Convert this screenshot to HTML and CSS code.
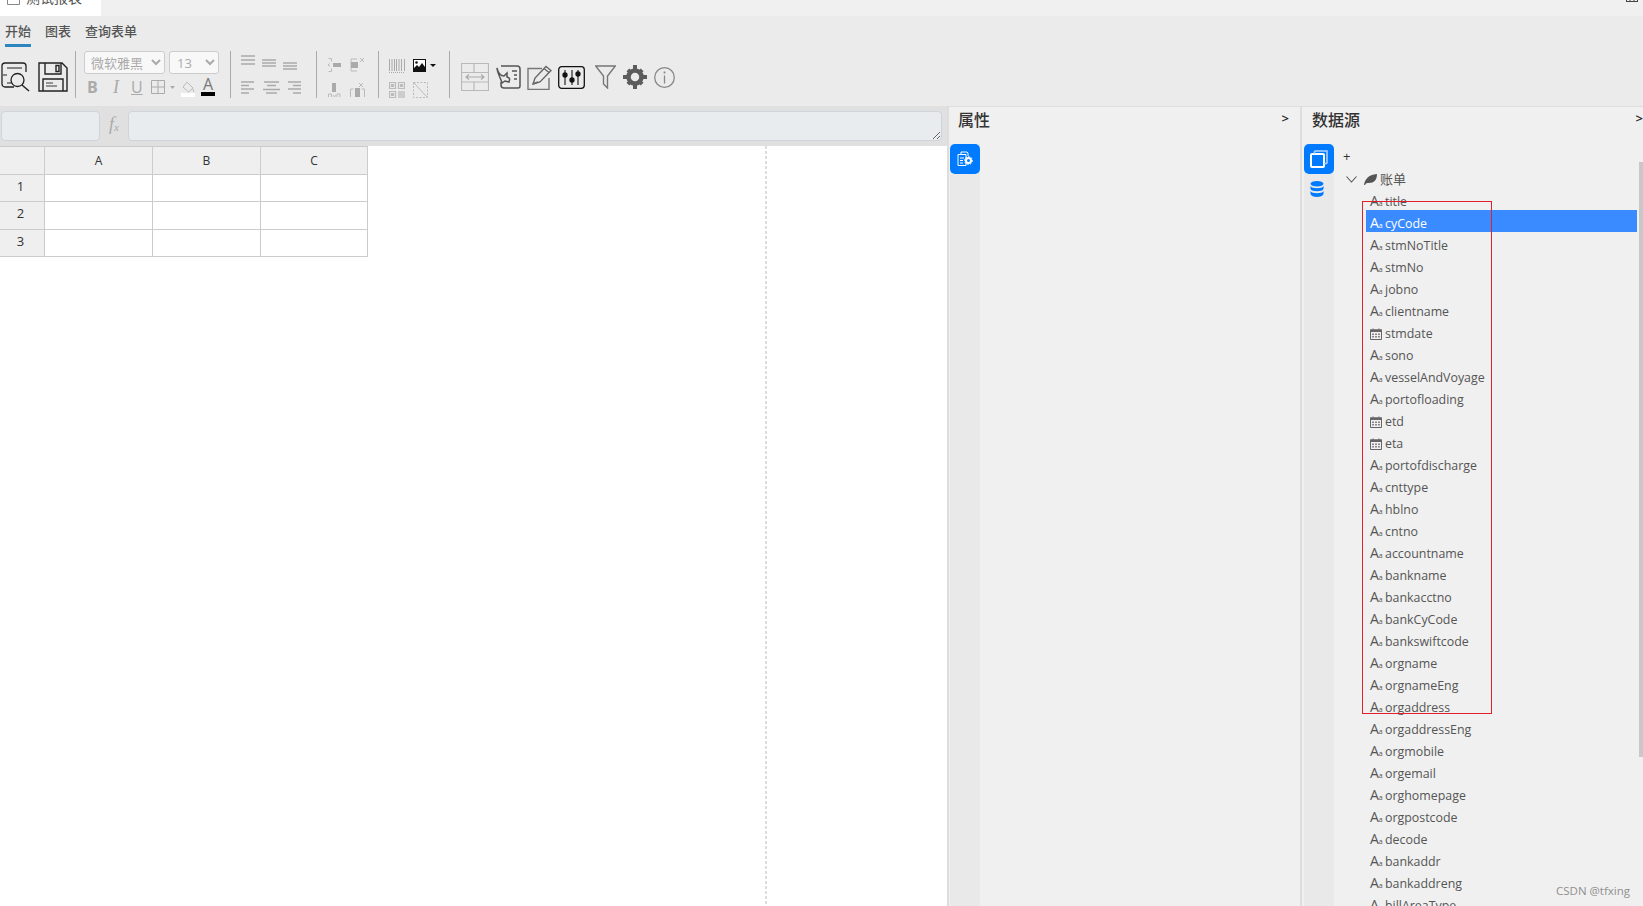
FILE: index.html
```html
<!DOCTYPE html>
<html lang="zh-CN">
<head>
    <meta charset="UTF-8">
    <title>报表设计器</title>
    <link rel="stylesheet" href="styles.css">
</head>
<body>
    <svg class="defs" width="0" height="0">
        <symbol id="cal" viewBox="0 0 12 12">
            <path d="M.5 2h11v9.500H.5z" fill="none" stroke="#666"/>
            <path d="M0 1.500h12V4H0z" fill="#666"/>
            <path d="M3 .5v2M9 .5v2" stroke="#666"/>
            <path d="M2 5.500h2v1.500H2zM5 5.500h2v1.500H5zM8 5.500h2v1.500H8zM2 8h2v1.500H2zM5 8h2v1.500H5zM8 8h2v1.500H8z" fill="#888"/>
        </symbol>
    </svg>

    <!-- top strip -->
    <div class="strip">
        <div class="doc-tab">
            <svg class="doc-icon" width="13" height="10" viewBox="0 0 13 10"><path d="M.5-5h12V4.500H.5z" fill="none" stroke="#888"/></svg>
            <span>测试报表</span>
        </div>
        <svg class="strip-icon" width="12" height="2" viewBox="0 0 12 2"><path d="M.5 0v2M4 0v2M8 0v2M11.500 0v2M0 1.500h12" stroke="#444"/></svg>
    </div>

    <!-- ribbon -->
    <div class="ribbon">
        <div class="tabs">
            <span class="tab active">开始</span>
            <span class="tab">图表</span>
            <span class="tab">查询表单</span>
        </div>
        <div class="tools">
            <div class="group g-file">
                <svg width="29" height="30" viewBox="0 0 29 30" fill="none" stroke="#222">
                    <path d="M13 25H4a3 3 0 0 1-3-3V4a3 3 0 0 1 3-3h18a3 3 0 0 1 3 3v6" stroke-width="1.300"/>
                    <path d="M6 6h15M1 13h5M6 21h4" stroke="#666" stroke-width="1.300"/>
                    <circle cx="16.500" cy="18" r="6.500" stroke-width="1.300"/>
                    <path d="M21 23l7 6" stroke-width="1.500"/>
                </svg>
                <svg width="30" height="30" viewBox="0 0 30 30" fill="none" stroke="#222" stroke-width="1.400">
                    <path d="M1 1h23l5 5v23H1z"/>
                    <path d="M7 1v11h16V1M18 3.500h3v6h-3z"/>
                    <path d="M5 29V17h20v12"/>
                    <path d="M8 21h7M8 24h11" stroke="#777"/>
                </svg>
            </div>
            <div class="group g-font">
                <div class="row">
                    <select class="sel sel-font" disabled><option>微软雅黑</option></select>
                    <select class="sel sel-size" disabled><option>13</option></select>
                </div>
                <div class="row fmt">
                    <span class="fmt-b">B</span>
                    <span class="fmt-i">I</span>
                    <span class="fmt-u">U</span>
                    <svg class="fmt-border" width="24" height="14" viewBox="0 0 24 14" fill="none" stroke="#aaa"><path d="M.5.500h13v13H.5zM7 .5v13M.5 7h13"/><path d="M19 6h5l-2.500 3z" fill="#aaa" stroke="none"/></svg>
                    <div class="color-tool fill">
                        <svg width="14" height="12" viewBox="0 0 14 12" fill="none" stroke="#bbb"><path d="M6 1l6 6-4.500 4L2 6zM12 8l1 3"/></svg>
                        <i class="swatch white"></i>
                    </div>
                    <div class="color-tool">
                        <span class="fmt-a">A</span>
                        <i class="swatch black"></i>
                    </div>
                </div>
            </div>
            <div class="group g-align">
                <div class="row">
                    <svg width="14" height="10" viewBox="0 0 14 10" stroke="#aaa" stroke-width="1.300"><path d="M0 1h14M0 5h14M0 9h14"/></svg>
                    <svg class="mid" width="14" height="8" viewBox="0 0 14 8" stroke="#aaa" stroke-width="1.300"><path d="M0 1h14M0 4h14M0 7h14"/></svg>
                    <svg class="low" width="14" height="8" viewBox="0 0 14 8" stroke="#aaa" stroke-width="1.300"><path d="M0 1h14M0 4h14M0 7h14"/></svg>
                </div>
                <div class="row">
                    <svg width="14" height="13" viewBox="0 0 14 13" stroke="#aaa" stroke-width="1.300"><path d="M0 1h13M0 4.500h8M0 8h13M0 12h8"/></svg>
                    <svg width="17" height="13" viewBox="0 0 17 13" stroke="#aaa" stroke-width="1.500"><path d="M1 1h15M4 4.500h9M0 8.500h17M3 12h11"/></svg>
                    <svg width="13" height="13" viewBox="0 0 13 13" stroke="#aaa" stroke-width="1.300"><path d="M0 1h13M5 4.500h8M0 8h13M5 12h8"/></svg>
                </div>
            </div>
            <div class="group g-merge">
                <div class="row">
                    <svg width="13" height="14" viewBox="0 0 13 14" fill="none" stroke="#bbb"><path d="M.5.500h3v3M.5 13.500h3v-3M2 5.500L0 7l2 1.500"/><path d="M5 5h8v4H5z" fill="#aaa" stroke="none"/></svg>
                    <svg width="15" height="14" viewBox="0 0 15 14" fill="none" stroke="#bbb"><path d="M1 1h6M1 13h6M1 1v12"/><path d="M1 4h7v6H1z" fill="#aaa" stroke="none"/><path d="M10 0l4 4M14 0l-4 4"/></svg>
                </div>
                <div class="row">
                    <svg width="13" height="14" viewBox="0 0 13 14" fill="none" stroke="#bbb"><path d="M4 0h4v9H4z" fill="#aaa" stroke="none"/><path d="M.5 14v-3h3v3M9 14v-3h3v3M5 12l1.500 2L8 12"/></svg>
                    <svg width="15" height="14" viewBox="0 0 15 14" fill="none" stroke="#bbb"><path d="M.5 14V6h3M14.500 14V6h-3"/><path d="M5 5h5v9H5z" fill="#aaa" stroke="none"/><path d="M9 0l4 4M13 0L9 4"/></svg>
                </div>
            </div>
            <div class="group g-code">
                <div class="row">
                    <svg width="16" height="14" viewBox="0 0 16 14" stroke="#aaa"><path d="M.5 0v12M3 0v12M5.500 0v12M7.500 0v12M10 0v12M12.500 0v12M15.500 0v12" stroke-width="1"/><path d="M0 13.500h16" stroke-dasharray="1 1"/></svg>
                    <div class="img-tool">
                        <svg width="13" height="13" viewBox="0 0 13 13"><path d="M0 0h13v13H0z" fill="#111"/><path d="M1 1h11v7L9 4 6 8 4 6 1 9z" fill="#fff"/><circle cx="3.500" cy="3.500" r="1.300" fill="#111"/></svg>
                        <i class="caret"></i>
                    </div>
                </div>
                <div class="row">
                    <svg width="16" height="16" viewBox="0 0 16 16" fill="none" stroke="#bbb" stroke-width="1.200"><path d="M.5.500h6v6h-6zM9.500.500h6v6h-6zM.5 9.500h6v6h-6z"/><path d="M2.500 2.500h2v2h-2zM11.500 2.500h2v2h-2zM2.500 11.500h2v2h-2z" fill="#bbb"/><path d="M9 9h7v7H9z" fill="#ccc" stroke="none"/></svg>
                    <svg width="15" height="16" viewBox="0 0 15 16" fill="none" stroke="#bbb"><path d="M.5.500h14v15H.5z" stroke-dasharray="2 1.500"/><path d="M1 1l13 14"/></svg>
                </div>
            </div>
            <div class="group g-end">
                <svg width="28" height="28" viewBox="0 0 28 28" fill="none" stroke="#b9b9b9" stroke-width="1.200"><path d="M.5.500h27v27H.5zM0 9.500h28M0 19h28M13 0v9.500M13 19v9"/><path d="M5 14h18M8 11.500L5 14l3 2.500M20 11.500l3 2.500-3 2.500" stroke="#aaa"/></svg>
                <svg width="25" height="24" viewBox="0 0 25 24" fill="none" stroke="#555" stroke-width="1.500"><path d="M5 1h16a3 3 0 0 1 3 3v17a2 2 0 0 1-2 2H8a3 3 0 0 1-3-3v-3"/><path d="M16 6h5M18 10h3M18 14h3"/><path d="M1 3c1 5 4 8 7 8l3-3v4c3 1 3 2 2 5l-4-1-3 2c-1-4-5-11-5-15z" fill="#ebebeb"/></svg>
                <svg width="25" height="25" viewBox="0 0 25 25" fill="none" stroke="#666" stroke-width="1.400"><path d="M15 3.500H1v21h21V13" stroke="#777"/><path d="M6 19l2-6L19 1.500l5 4L13 17z" fill="#ebebeb"/><path d="M6 19l5-2M17 3.500l5 4"/></svg>
                <svg width="27" height="23" viewBox="0 0 27 23" fill="none" stroke="#111" stroke-width="1.300"><rect x=".7" y=".7" width="25.600" height="21.600" rx="3"/><path d="M7 4v15M14 4v15M20 4v15" stroke="#444" stroke-width="1.400"/><circle cx="7" cy="9" r="2" fill="#111"/><circle cx="14" cy="14" r="2" fill="#111"/><circle cx="20" cy="8" r="2" fill="#111"/></svg>
                <svg width="21" height="24" viewBox="0 0 21 24" fill="none" stroke="#777" stroke-width="1.400"><path d="M.7 1h19.600L12.500 11v12L8.500 19v-8z"/></svg>
                <svg width="24" height="24" viewBox="0 0 24 24"><circle cx="12" cy="12" r="6.500" fill="none" stroke="#5c5c5c" stroke-width="4.500"/><path d="M10 0h4v4h-4zM10 20h4v4h-4zM0 10h4v4H0zM20 10h4v4h-4z" fill="#5c5c5c"/><path d="M3.500 6.300L6.300 3.500l3 3-2.800 2.800zM20.500 6.300L17.700 3.500l-3 3 2.800 2.800zM3.500 17.700l2.800 2.800 3-3-2.800-2.800zM20.500 17.700l-2.800 2.800-3-3 2.800-2.800z" fill="#5c5c5c"/></svg>
                <svg width="21" height="21" viewBox="0 0 21 21" fill="none" stroke="#888" stroke-width="1.300"><circle cx="10.500" cy="10.500" r="9.800"/><path d="M10.500 8.500v8"/><path d="M10.500 4.500v2" stroke-width="1.800"/></svg>
            </div>
        </div>
    </div>

    <div class="main">
        <!-- sheet -->
        <div class="editor">
            <div class="formula">
                <input class="name-box" type="text" disabled>
                <span class="fx">f<sub>x</sub></span>
                <textarea class="formula-input" disabled></textarea>
            </div>
            <div class="sheet">
                <table class="grid">
                    <tr class="head"><th class="corner"></th><th class="col">A</th><th class="col">B</th><th class="col last">C</th></tr>
                    <tr class="r27"><th>1</th><td></td><td></td><td></td></tr>
                    <tr class="r28"><th>2</th><td></td><td></td><td></td></tr>
                    <tr class="r27"><th>3</th><td></td><td></td><td></td></tr>
                </table>
                <div class="page-line"></div>
            </div>
        </div>

        <!-- properties -->
        <div class="panel props">
            <div class="panel-head"><span class="panel-title">属性</span><span class="panel-toggle">&gt;</span></div>
            <div class="panel-body">
                <div class="side">
                    <div class="side-btn on">
                        <svg width="16" height="16" viewBox="0 0 16 16" fill="none" stroke="#fff"><path d="M3 3.500h6v11H1V3.500z"/><path d="M4 3V1h6l1 1v3M3 7h4M3 9.500h3M3 12h3"/><circle cx="11.500" cy="9.500" r="2.500" stroke-width="2"/><circle cx="11.500" cy="9.500" r="4" stroke-width="1" stroke-dasharray="1.500 1.500"/></svg>
                    </div>
                </div>
            </div>
        </div>

        <!-- data source -->
        <div class="panel data">
            <div class="panel-head"><span class="panel-title">数据源</span><span class="panel-toggle">&gt;</span></div>
            <div class="panel-body">
                <div class="side">
                    <div class="side-btn on">
                        <svg width="18" height="18" viewBox="0 0 18 18" fill="none"><path d="M4.500 1h12.500v12.500" stroke="#b5d5ff" stroke-width="1.500"/><rect x="1" y="4" width="13" height="13" rx="1" stroke="#fff" stroke-width="2"/><path d="M4.500 1v3M14 13.500h3" stroke="#b5d5ff" stroke-width="1.500"/></svg>
                    </div>
                    <div class="side-btn db">
                        <svg width="14" height="16" viewBox="0 0 14 16"><ellipse cx="7" cy="2.800" rx="6.500" ry="2.800" fill="#007bff"/><path d="M.5 5c1 3 12 3 13 0v3c-1 3-12 3-13 0zM.5 10c1 3 12 3 13 0v3c-1 4-12 4-13 0z" fill="#007bff"/></svg>
                    </div>
                </div>
                <div class="tree">
                    <div class="add">+</div>
                    <div class="root">
                        <svg class="chev" width="11" height="7" viewBox="0 0 11 7" fill="none" stroke="#555" stroke-width="1.100"><path d="M.5.500L5.500 6l5-5.500"/></svg>
                        <svg class="leaf" width="13" height="11" viewBox="0 0 13 11"><path d="M0 11C1 5 4 1 13 0c0 6-3 9-8 9-1 0-2 0-3 .5L1 11z" fill="#555"/></svg>
                        <span>账单</span>
                    </div>
                    <div class="node"><span class="aa">A<small>a</small></span>title</div>
                    <div class="node sel-row"><span class="aa">A<small>a</small></span>cyCode</div>
                    <div class="node"><span class="aa">A<small>a</small></span>stmNoTitle</div>
                    <div class="node"><span class="aa">A<small>a</small></span>stmNo</div>
                    <div class="node"><span class="aa">A<small>a</small></span>jobno</div>
                    <div class="node"><span class="aa">A<small>a</small></span>clientname</div>
                    <div class="node"><svg class="cal" width="12" height="12"><use href="#cal"/></svg>stmdate</div>
                    <div class="node"><span class="aa">A<small>a</small></span>sono</div>
                    <div class="node"><span class="aa">A<small>a</small></span>vesselAndVoyage</div>
                    <div class="node"><span class="aa">A<small>a</small></span>portofloading</div>
                    <div class="node"><svg class="cal" width="12" height="12"><use href="#cal"/></svg>etd</div>
                    <div class="node"><svg class="cal" width="12" height="12"><use href="#cal"/></svg>eta</div>
                    <div class="node"><span class="aa">A<small>a</small></span>portofdischarge</div>
                    <div class="node"><span class="aa">A<small>a</small></span>cnttype</div>
                    <div class="node"><span class="aa">A<small>a</small></span>hblno</div>
                    <div class="node"><span class="aa">A<small>a</small></span>cntno</div>
                    <div class="node"><span class="aa">A<small>a</small></span>accountname</div>
                    <div class="node"><span class="aa">A<small>a</small></span>bankname</div>
                    <div class="node"><span class="aa">A<small>a</small></span>bankacctno</div>
                    <div class="node"><span class="aa">A<small>a</small></span>bankCyCode</div>
                    <div class="node"><span class="aa">A<small>a</small></span>bankswiftcode</div>
                    <div class="node"><span class="aa">A<small>a</small></span>orgname</div>
                    <div class="node"><span class="aa">A<small>a</small></span>orgnameEng</div>
                    <div class="node"><span class="aa">A<small>a</small></span>orgaddress</div>
                    <div class="node"><span class="aa">A<small>a</small></span>orgaddressEng</div>
                    <div class="node"><span class="aa">A<small>a</small></span>orgmobile</div>
                    <div class="node"><span class="aa">A<small>a</small></span>orgemail</div>
                    <div class="node"><span class="aa">A<small>a</small></span>orghomepage</div>
                    <div class="node"><span class="aa">A<small>a</small></span>orgpostcode</div>
                    <div class="node"><span class="aa">A<small>a</small></span>decode</div>
                    <div class="node"><span class="aa">A<small>a</small></span>bankaddr</div>
                    <div class="node"><span class="aa">A<small>a</small></span>bankaddreng</div>
                    <div class="node"><span class="aa">A<small>a</small></span>billAreaType</div>
                    <div class="red-box"></div>
                    <div class="scroll-thumb"></div>
                </div>
            </div>
        </div>
    </div>

    <div class="watermark">CSDN @tfxing</div>
</body>
</html>
```

FILE: styles.css
```css
html, body {
    margin: 0;
    padding: 0;
    height: 100%;
    overflow: hidden;
}

body {
    position: relative;
    font-family: "Open Sans", "Noto Sans CJK SC", sans-serif;
    font-size: 13px;
    color: #555;
    background-color: #fff;
}

.defs {
    position: absolute;
}

svg {
    display: block;
    flex: none;
}

/* top strip */
.strip {
    height: 16px;
    display: flex;
    justify-content: space-between;
    background-color: #f0f0f0;
    overflow: hidden;
}

.doc-tab {
    width: 101px;
    height: 16px;
    background-color: #fff;
    display: flex;
    gap: 6px;
    padding-left: 7px;
    box-sizing: border-box;
}

.doc-tab span {
    font-size: 14px;
    line-height: 12px;
    margin-top: -8px;
}

.strip-icon {
    margin-right: 5px;
}

/* ribbon */
.ribbon {
    height: 90px;
    background-color: #ebebeb;
}

.tabs {
    height: 35px;
    display: flex;
    gap: 14px;
    padding-left: 5px;
    box-sizing: border-box;
}

.tab {
    height: 29px;
    line-height: 30px;
    font-weight: 500;
    color: #555;
}

.tab.active {
    border-bottom: 3px solid #2e86c1;
    box-sizing: content-box;
    height: 25px;
    margin-top: 3px;
    line-height: 24px;
}

.tools {
    display: flex;
    height: 47px;
}

.group {
    flex: none;
    box-sizing: border-box;
    border-right: 1px solid #aaa;
    height: 47px;
}

.row {
    display: flex;
}

.g-file {
    width: 76px;
    display: flex;
    gap: 8px;
    padding: 11px 0 0 1px;
}

.g-font {
    width: 155px;
    padding-left: 8px;
}

.sel {
    height: 23px;
    font-family: "Open Sans", "Noto Sans CJK SC", sans-serif;
    font-size: 13px;
    color: #aaa;
    background-color: #f8f8f8;
    border: 1px solid #ccc;
    border-radius: 3px;
    opacity: 1;
}

.sel-font {
    width: 81px;
    padding-left: 2px;
}

.sel-size {
    width: 50px;
    margin-left: 4px;
    padding-left: 3px;
}

.fmt {
    align-items: flex-start;
    margin-top: 3px;
    height: 20px;
    color: #aaa;
    font-size: 16px;
    line-height: 20px;
}

.fmt-b {
    font-weight: 700;
    margin-left: 3px;
    width: 22px;
}

.fmt-i {
    font-family: "Liberation Serif", serif;
    font-size: 18px;
    font-style: italic;
    width: 20px;
    padding-left: 4px;
    box-sizing: border-box;
}

.fmt-u {
    text-decoration: underline;
    width: 20px;
    margin-left: 2px;
}

.fmt-border {
    margin-top: 3px;
    margin-right: 6px;
}

.color-tool {
    width: 14px;
    margin-right: 6px;
}

.color-tool.fill svg {
    margin-top: 4px;
}

.fmt-a {
    display: block;
    color: #777;
    font-size: 16px;
    line-height: 15px;
    text-align: center;
}

.swatch {
    display: block;
    height: 4px;
}

.swatch.white {
    background-color: #fff;
}

.swatch.black {
    background-color: #000;
}

.g-align {
    width: 86px;
    padding: 4px 0 0 10px;
}

.g-align .row {
    gap: 7px;
    height: 24px;
}

.g-align .row + .row {
    margin-top: 2px;
    gap: 8px;
}

.g-align .mid {
    margin-top: 4px;
}

.g-align .low {
    margin-top: 7px;
}

.g-merge {
    width: 62px;
    padding: 7px 0 0 11px;
}

.g-merge .row {
    gap: 9px;
    height: 25px;
}

.g-code {
    width: 71px;
    padding: 8px 0 0 10px;
}

.g-code .row {
    gap: 8px;
    height: 23px;
}

.img-tool {
    display: flex;
    gap: 4px;
    align-items: center;
    height: 13px;
}

.caret {
    border-top: 3px solid #111;
    border-left: 3px solid transparent;
    border-right: 3px solid transparent;
}

.g-end {
    border-right: none;
    display: flex;
    align-items: center;
    padding: 5px 0 0 11px;
    flex: 1;
}

.g-end svg:nth-child(2) {
    margin-left: 7px;
}

.g-end svg:nth-child(3) {
    margin-left: 6px;
}

.g-end svg:nth-child(4) {
    margin-left: 6px;
}

.g-end svg:nth-child(5) {
    margin-left: 10px;
}

.g-end svg:nth-child(6) {
    margin-left: 7px;
}

.g-end svg:nth-child(7) {
    margin-left: 7px;
}

/* main */
.main {
    display: flex;
    height: 800px;
    overflow: hidden;
}

.editor {
    width: 947px;
    flex: none;
    display: flex;
    flex-direction: column;
}

.formula {
    height: 40px;
    flex: none;
    box-sizing: border-box;
    display: flex;
    align-items: flex-start;
    padding: 5px 5px 0 1px;
    background-color: #e0e0e0;
}

.name-box {
    width: 99px;
    height: 30px;
    box-sizing: border-box;
    padding: 0;
    background-color: #e9ecef;
    border: 1px solid #ced4da;
    border-radius: 4px;
}

.fx {
    width: 28px;
    text-align: center;
    font-family: "Liberation Serif", serif;
    font-style: italic;
    font-size: 18px;
    color: #aaa;
    line-height: 26px;
}

.fx sub {
    font-size: 11px;
    vertical-align: -1px;
    line-height: 0;
}

.formula-input {
    flex: 1;
    height: 30px;
    box-sizing: border-box;
    margin: 0;
    padding: 0;
    background-color: #e9ecef;
    border: 1px solid #ced4da;
    border-radius: 4px;
    resize: both;
}

.sheet {
    flex: 1;
    position: relative;
    background-color: #fff;
}

.grid {
    border-collapse: collapse;
    table-layout: fixed;
    width: 367px;
    font-size: 12px;
}

.grid th, .grid td {
    border: 1px solid #ccc;
    padding: 0;
    font-weight: 400;
    text-align: center;
}

.grid th {
    background-color: #efefef;
    color: #333;
}

.grid .corner {
    width: 44px;
    border-left: none;
}

.grid .col {
    width: 107px;
}

.grid .col.last {
    width: 106px;
}

.r27 th, .r28 th {
    border-left: none;
    font-size: 13px;
}

.grid .r27 th, .grid .r28 th {
    padding: 0 3px 5px 0;
}

.grid .head {
    height: 28px;
}

.r27 {
    height: 27px;
}

.r28 {
    height: 28px;
}

.page-line {
    position: absolute;
    left: 765px;
    top: 0;
    bottom: 0;
    width: 2px;
    background: repeating-linear-gradient(to bottom, #ddd 0, #ddd 3px, transparent 3px, transparent 5px);
}

/* side panels */
.panel {
    display: flex;
    flex-direction: column;
    background-color: #f0f0f0;
    border-left: 2px solid #ddd;
    border-top: 1px solid #ddd;
    box-sizing: border-box;
}

.props {
    width: 353px;
    flex: none;
}

.data {
    flex: 1;
    min-width: 0;
}

.panel-head {
    height: 37px;
    flex: none;
    display: flex;
    justify-content: space-between;
    padding: 0 9px;
    line-height: 14px;
}

.panel-title {
    font-size: 16px;
    font-weight: 500;
    color: #333;
    line-height: 26px;
}

.data .panel-title {
    margin-left: 1px;
}

.panel-toggle {
    font-size: 13px;
    font-weight: 600;
    color: #222;
    line-height: 22px;
}

.props .panel-toggle {
    margin-right: 2px;
}

.data .panel-toggle {
    margin-right: -9px;
}

.panel-body {
    flex: 1;
    display: flex;
    min-height: 0;
}

.side {
    width: 30px;
    flex: none;
    margin-left: 1px;
    background-color: #e9e9e9;
}

.data .side {
    margin-left: 2px;
}

.side-btn {
    height: 30px;
    display: flex;
    align-items: center;
    justify-content: center;
}

.side-btn.db {
    padding-right: 4px;
    box-sizing: border-box;
}

.side-btn.on {
    background-color: #007bff;
    border-radius: 5px;
}

/* tree */
.tree {
    flex: 1;
    position: relative;
    padding-top: 1px;
    overflow: hidden;
    min-width: 0;
}

.add {
    height: 23px;
    line-height: 22px;
    padding-left: 9px;
    color: #333;
}

.root {
    height: 20px;
    box-sizing: border-box;
    padding: 2px 0 0 12px;
    display: flex;
    align-items: center;
    line-height: 18px;
}

.leaf {
    margin-left: 7px;
    margin-right: 3px;
}

.node {
    height: 22px;
    box-sizing: border-box;
    line-height: 16px;
    margin: 0 6px 0 32px;
    padding: 6px 0 0 4px;
    display: flex;
    align-items: center;
    white-space: nowrap;
    font-size: 12.4px;
}

.aa {
    width: 15px;
    flex: none;
    font-size: 14px;
}

.aa small {
    font-size: 7px;
}

.cal {
    margin-right: 3px;
}

.sel-row {
    background-color: #3a8bff;
    color: #fff;
}

.red-box {
    position: absolute;
    left: 28px;
    top: 57px;
    width: 130px;
    height: 513px;
    box-sizing: border-box;
    border: 1px solid #e0202c;
    pointer-events: none;
}

.scroll-thumb {
    position: absolute;
    right: 0;
    top: 18px;
    width: 4px;
    height: 595px;
    background-color: #c8c8c8;
}

.watermark {
    position: absolute;
    left: 1556px;
    top: 883px;
    font-size: 11.5px;
    line-height: 16px;
    color: #8f8f8f;
}
```
